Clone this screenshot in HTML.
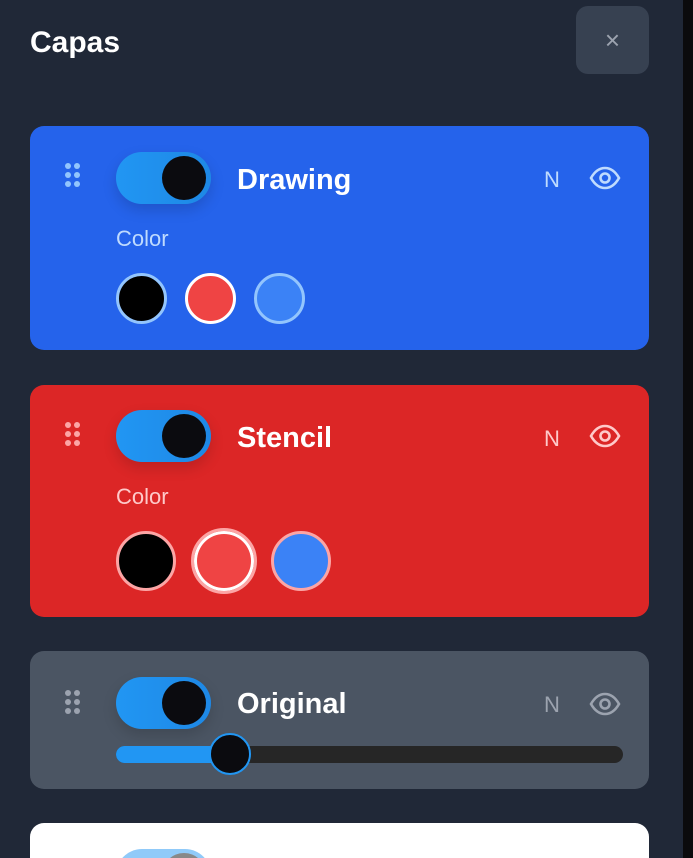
<!DOCTYPE html>
<html style="width:693px;height:858px;overflow:hidden"><head><meta charset="utf-8"><style>
*{margin:0;padding:0;box-sizing:border-box}
body{width:693px;height:858px;overflow:hidden;background:#202837;font-family:"Liberation Sans","DejaVu Sans",sans-serif;position:relative}
.strip{position:absolute;left:683px;top:0;width:10px;height:858px;background:#0b0b0d}
.title{position:absolute;left:30px;top:26px;color:#fff;font-size:30px;font-weight:bold}
.close{position:absolute;left:576px;top:6px;width:73px;height:68px;background:#374151;border-radius:12px;color:#9ca3af;font-size:26px;text-align:center;line-height:68px}
.card{position:absolute;left:30px;width:619px;border-radius:14px;overflow:hidden}
.drag{position:absolute;left:35px;width:16px}
.drag i{position:absolute;width:6px;height:6px;border-radius:50%}
.tog{position:absolute;left:86px;width:95px;height:52px;border-radius:26px;background:linear-gradient(90deg,#2196f3,#1e88e5);box-shadow:0 6px 14px rgba(0,0,0,.15)}
.tog b{position:absolute;right:5px;top:4px;width:44px;height:44px;border-radius:50%;background:#0b0b0f}
.name{position:absolute;left:207px;color:#fff;font-weight:bold;font-size:29px}
.n{position:absolute;left:514px;font-size:22px}
.eye{position:absolute;left:559px}
.lbl{position:absolute;left:86px;font-size:22px}
.sw{position:absolute;border-radius:50%}
</style></head><body>
<div class="strip"></div>
<div class="title">Capas</div>
<div class="close">×</div>

<div class="card" style="top:126px;height:224px;background:#2563eb">
 <div class="drag" style="top:37px"><i style="left:0;top:0;background:#93c5fd"></i><i style="left:9px;top:0;background:#93c5fd"></i><i style="left:0;top:9px;background:#93c5fd"></i><i style="left:9px;top:9px;background:#93c5fd"></i><i style="left:0;top:18px;background:#93c5fd"></i><i style="left:9px;top:18px;background:#93c5fd"></i></div>
 <div class="tog" style="top:26px"><b></b></div>
 <div class="name" style="top:38px">Drawing</div>
 <div class="n" style="top:41px;color:#bfdbfe">N</div>
 <svg class="eye" style="top:40px" width="32" height="24" viewBox="0 0 32 24"><path d="M2 12C6 5 11 2 16 2s10 3 14 10c-4 7-9 10-14 10S6 19 2 12z" fill="none" stroke="#bfdbfe" stroke-width="2.6"/><circle cx="16" cy="12" r="4.5" fill="none" stroke="#bfdbfe" stroke-width="2.6"/></svg>
 <div class="lbl" style="top:100px;color:#bfdbfe">Color</div>
 <div class="sw" style="left:86px;top:147px;width:51px;height:51px;background:#000;border:3px solid #93c5fd"></div>
 <div class="sw" style="left:155px;top:147px;width:51px;height:51px;background:#ef4444;border:3px solid #fff"></div>
 <div class="sw" style="left:224px;top:147px;width:51px;height:51px;background:#3b82f6;border:3px solid #93c5fd"></div>
</div>

<div class="card" style="top:385px;height:232px;background:#dc2626">
 <div class="drag" style="top:37px"><i style="left:0;top:0;background:#fca5a5"></i><i style="left:9px;top:0;background:#fca5a5"></i><i style="left:0;top:9px;background:#fca5a5"></i><i style="left:9px;top:9px;background:#fca5a5"></i><i style="left:0;top:18px;background:#fca5a5"></i><i style="left:9px;top:18px;background:#fca5a5"></i></div>
 <div class="tog" style="top:25px"><b></b></div>
 <div class="name" style="top:37px">Stencil</div>
 <div class="n" style="top:41px;color:#fecaca">N</div>
 <svg class="eye" style="top:39px" width="32" height="24" viewBox="0 0 32 24"><path d="M2 12C6 5 11 2 16 2s10 3 14 10c-4 7-9 10-14 10S6 19 2 12z" fill="none" stroke="#fecaca" stroke-width="2.6"/><circle cx="16" cy="12" r="4.5" fill="none" stroke="#fecaca" stroke-width="2.6"/></svg>
 <div class="lbl" style="top:99px;color:#fecaca">Color</div>
 <div class="sw" style="left:86px;top:146px;width:60px;height:60px;background:#000;border:3px solid #fca5a5"></div>
 <div class="sw" style="left:161px;top:143px;width:66px;height:66px;background:#ef4444;border:3px solid #fca5a5;box-shadow:inset 0 0 0 3px #fff"></div>
 <div class="sw" style="left:241px;top:146px;width:60px;height:60px;background:#3b82f6;border:3px solid #fca5a5"></div>
</div>

<div class="card" style="top:651px;height:138px;background:#4b5563">
 <div class="drag" style="top:39px"><i style="left:0;top:0;background:#9ca3af"></i><i style="left:9px;top:0;background:#9ca3af"></i><i style="left:0;top:9px;background:#9ca3af"></i><i style="left:9px;top:9px;background:#9ca3af"></i><i style="left:0;top:18px;background:#9ca3af"></i><i style="left:9px;top:18px;background:#9ca3af"></i></div>
 <div class="tog" style="top:26px"><b></b></div>
 <div class="name" style="top:37px">Original</div>
 <div class="n" style="top:41px;color:#9ca3af">N</div>
 <svg class="eye" style="top:41px" width="32" height="24" viewBox="0 0 32 24"><path d="M2 12C6 5 11 2 16 2s10 3 14 10c-4 7-9 10-14 10S6 19 2 12z" fill="none" stroke="#9ca3af" stroke-width="2.6"/><circle cx="16" cy="12" r="4.5" fill="none" stroke="#9ca3af" stroke-width="2.6"/></svg>
 <div style="position:absolute;left:86px;top:95px;width:507px;height:17px;border-radius:9px;background:#262626"></div>
 <div style="position:absolute;left:86px;top:95px;width:120px;height:17px;border-radius:9px;background:#2196f3"></div>
 <div style="position:absolute;left:179px;top:82px;width:42px;height:42px;border-radius:50%;background:#0b0b0f;border:2px solid #2196f3"></div>
</div>

<div class="card" style="top:823px;height:35px;background:#fff;border-radius:14px 14px 0 0">
 <svg style="position:absolute;left:86px;top:26px" width="95" height="9" viewBox="0 0 95 9"><rect x="0" y="0" width="95" height="52" rx="26" fill="#90caf9"/><circle cx="68" cy="26" r="22" fill="#888"/></svg>
</div>
</body></html>
